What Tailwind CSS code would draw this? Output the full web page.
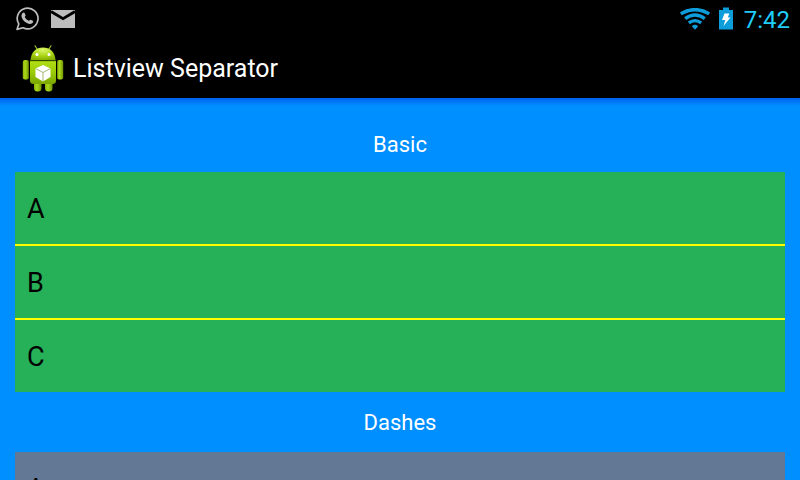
<!DOCTYPE html>
<html lang="en">
<head>
<meta charset="utf-8">
<meta name="viewport" content="width=device-width, initial-scale=1">
<title>Listview Separator</title>
<script src="https://cdn.jsdelivr.net/npm/@tailwindcss/browser@4"></script>
</head>
<body class="flex h-screen flex-col overflow-hidden bg-[#008fff] font-['Roboto',sans-serif]">
  <div class="flex h-[38px] shrink-0 items-center justify-between bg-black pr-[10px] pl-[15px]">
    <div class="flex items-center gap-3">
      <svg class="h-6 w-6" viewBox="0 0 24 24" role="img" aria-label="WhatsApp">
        <path d="M2 22.400 3.800 17A10.400 10.400 0 1 1 8 20.800Z" fill="none" stroke="#bdbdbd" stroke-width="1.700" stroke-linejoin="round"/>
        <path d="M8 5.800c.6-.4 1.300-.3 1.600.3l1 2.100c.2.500-1 1.400-.8 1.900.8 1.700 2.200 3 3.900 3.700.6.2 1.300-1.300 1.900-1.100l2.200 1.100c.5.300.5.800.2 1.500-.6 1.400-2.400 2-3.900 1.600-3.900-1-6.700-3.700-7.500-6.800-.4-1.700.2-3.500 1.400-4.300Z" fill="#bdbdbd"/>
      </svg>
      <svg class="h-[18px] w-6" viewBox="0 0 24 18" role="img" aria-label="New mail">
        <path d="M0 0H24V18H0Z" fill="#bdbdbd"/>
        <path d="M0 1.500 12 8.700 24 1.500" fill="none" stroke="#000" stroke-width="2.800"/>
      </svg>
    </div>
    <div class="flex items-center">
      <svg class="mr-2 h-[22px] w-[30px]" viewBox="0 0 30 22" fill="none" stroke="#0d9ddb" role="img" aria-label="Wi-Fi">
        <path d="M.8 5.800Q15-2.400 29.200 5.800" stroke-width="3.600"/>
        <path d="M5.200 10.600Q15 3.600 24.800 10.600" stroke-width="3.400"/>
        <path d="M8.800 14.900Q15 10.300 21.200 14.900" stroke-width="3.200"/>
        <path d="M11.800 18.200Q15 15.500 18.200 18.200L15 21.700Z" fill="#0d9ddb" stroke="none"/>
      </svg>
      <svg class="mr-[10px] h-6 w-4" viewBox="0 0 16 24" role="img" aria-label="Battery charging">
        <path d="M5 .5h6v2.500h4V22.500H1V3h4Z" fill="#0d9ddb"/>
        <path d="M6.500 6.500h4.800L9.800 10.500H12.500L5.500 19l1.800-6H4Z" fill="#fff"/>
      </svg>
      <time class="pt-px text-2xl text-[#1fccfa]">7:42</time>
    </div>
  </div>
  <header class="flex h-[60px] shrink-0 items-center gap-[9px] bg-black pt-0.5 pl-[22px]">
    <svg class="h-12 w-[42px]" viewBox="0 0 42 48" aria-hidden="true">
      <defs>
        <linearGradient id="body" x1="0" y1="0" x2="0" y2="1">
          <stop offset="0" stop-color="#b2df12"/><stop offset=".5" stop-color="#9acb06"/><stop offset="1" stop-color="#7ba600"/>
        </linearGradient>
        <radialGradient id="head" cx=".5" cy=".2" r=".8">
          <stop offset="0" stop-color="#dcf76a"/><stop offset=".6" stop-color="#a8d414"/><stop offset="1" stop-color="#86b000"/>
        </radialGradient>
        <linearGradient id="limb" x1="0" y1="0" x2="1" y2="0">
          <stop offset="0" stop-color="#8ab504"/><stop offset=".4" stop-color="#abd81c"/><stop offset="1" stop-color="#6f9600"/>
        </linearGradient>
      </defs>
      <path d="M13 .8 16 5.500M29 .8 26 5.500" stroke="#9abf2a" stroke-width="1.200" stroke-linecap="round"/>
      <rect x="12" y="34" width="7.500" height="12.500" rx="3.500" fill="url(#limb)"/>
      <rect x="23" y="34" width="7.500" height="12.500" rx="3.500" fill="url(#limb)"/>
      <rect x=".8" y="15" width="6" height="19.500" rx="2" fill="url(#limb)"/>
      <rect x="35.200" y="15" width="6" height="19.500" rx="2" fill="url(#limb)"/>
      <path d="M8.500 15C9 7 14 2.500 21 2.500S33 7 33.500 15Z" fill="url(#head)"/>
      <path d="M8 16h26V35.500q0 3.500-3.500 3.500H11.500q-3.500 0-3.500-3.500Z" fill="url(#body)"/>
      <path d="M8 15.700h26" stroke="#3f5a00" stroke-width="1"/>
      <circle cx="15" cy="9.500" r="1.500" fill="#fff"/><circle cx="27" cy="9.500" r="1.500" fill="#fff"/>
      <path d="M21 20 28.500 23.500v8.500L21 36.500l-7.500-4.500V23.500Z" fill="#fff"/>
      <path d="M13.500 23.500 21 27.500l7.500-4M21 27.500v8.500" fill="none" stroke="#a5b878" stroke-width="1"/>
    </svg>
    <h1 class="text-[25px] text-white">Listview Separator</h1>
  </header>
  <main class="grow bg-linear-to-b from-[#0060f0] to-[#008fff] to-[8px] px-[15px] pt-[18px]">
    <section>
      <h2 class="flex h-14 items-center justify-center text-[22px] text-white">Basic</h2>
      <ul class="divide-y-2 divide-[#ffff00] bg-[#26b057] text-[27px] text-black">
        <li class="px-3 pt-[17px] pb-[15px] leading-10">A</li>
        <li class="px-3 pt-[17px] pb-[15px] leading-10">B</li>
        <li class="px-3 pt-[17px] pb-[15px] leading-10">C</li>
      </ul>
    </section>
    <section>
      <h2 class="flex h-[60px] items-center justify-center text-[22px] text-white">Dashes</h2>
      <ul class="bg-[#637895] text-[27px] text-black">
        <li class="px-3 pt-[17px] pb-[15px] leading-10">A</li>
      </ul>
    </section>
  </main>
</body>
</html>
